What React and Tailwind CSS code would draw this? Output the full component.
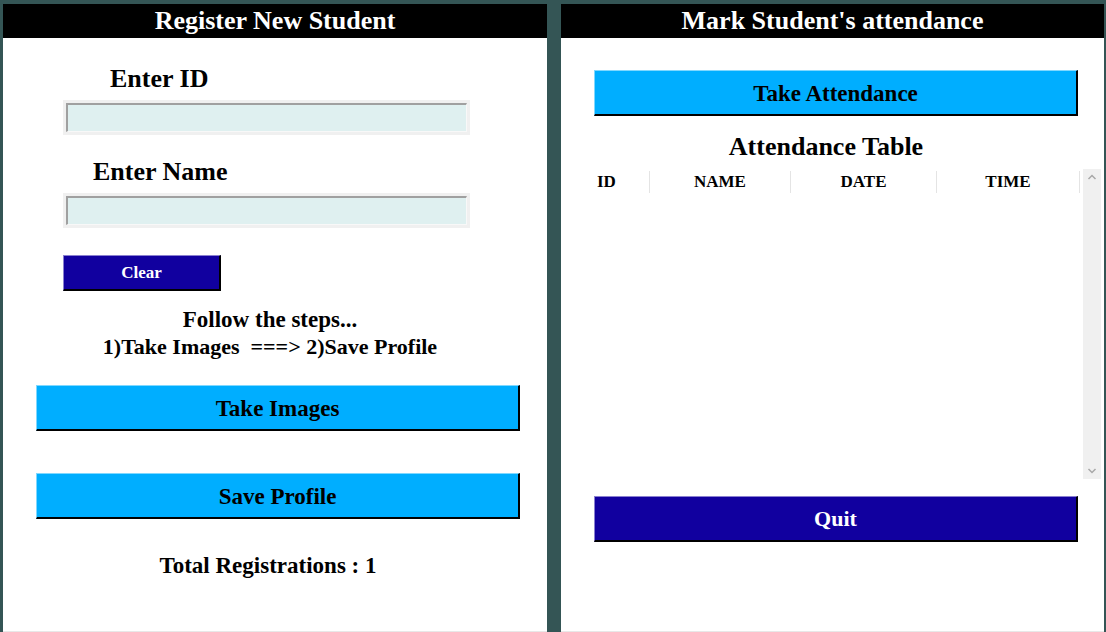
import React from 'react';

const serif = { fontFamily: '"Liberation Serif", "Times New Roman", serif' };

const Field = () => (
  <div className="ml-[60px] w-[407px] h-[35px] bg-[#f0f0f0] p-[3px]">
    <div className="w-full h-full bg-[#dff0f0] border-t-2 border-l-2 border-[#a0a0a0] border-b border-r border-b-[#f8f8f8] border-r-[#f8f8f8]"></div>
  </div>
);

const BigButton = ({ label, dark, size }) => (
  <div
    className={
      'ml-[33px] w-[484px] h-[46px] flex items-center justify-center font-bold border-t border-l border-b-2 border-r-2 border-b-black border-r-black ' +
      (size || 'text-[23px] pt-[3px]') +
      (dark
        ? ' bg-[#11009f] text-white border-t-[#8a80d0] border-l-[#8a80d0]'
        : ' bg-[#00aeff] text-black border-t-[#80d8ff] border-l-[#80d8ff]')
    }
  >
    {label}
  </div>
);

const ScrollBar = () => (
  <div className="w-[18px] h-full bg-[#f0f0f0] flex flex-col items-center justify-between py-[4px]">
    <svg width="10" height="8" viewBox="0 0 10 8">
      <path d="M1.5 6 L5 2.5 L8.5 6" stroke="#a8a8a8" strokeWidth="1.5" fill="none" />
    </svg>
    <svg width="10" height="8" viewBox="0 0 10 8">
      <path d="M1.5 2 L5 5.5 L8.5 2" stroke="#a8a8a8" strokeWidth="1.5" fill="none" />
    </svg>
  </div>
);

const RegisterPanel = () => (
  <div className="w-[544px] h-[628px] bg-white flex flex-col border-b border-[#e8e8e8]">
    <div className="h-[34px] bg-black text-white text-[26px] font-bold flex items-center justify-center leading-none">
      Register New Student
    </div>
    <div className="ml-[107px] mt-[28px] text-[26px] font-bold leading-[26px]">Enter ID</div>
    <div className="mt-[8px]">
      <Field />
    </div>
    <div className="ml-[90px] mt-[24px] text-[26px] font-bold leading-[26px]">Enter Name</div>
    <div className="mt-[8px]">
      <Field />
    </div>
    <div className="ml-[60px] mt-[27px] w-[158px] h-[36px] bg-[#11009f] text-white text-[17px] font-bold flex items-center justify-center border-t border-l border-t-[#8a80d0] border-l-[#8a80d0] border-b-2 border-r-2 border-b-black border-r-black">
      Clear
    </div>
    <div className="mt-[17px] w-[534px] text-center text-[23px] font-bold leading-[24px]">Follow the steps...</div>
    <div className="mt-[4px] w-[534px] text-center text-[22px] font-bold leading-[22px] whitespace-pre">
      {'1)Take Images  ===> 2)Save Profile'}
    </div>
    <div className="mt-[27px]">
      <BigButton label="Take Images" />
    </div>
    <div className="mt-[42px]">
      <BigButton label="Save Profile" />
    </div>
    <div className="mt-[35px] w-[530px] text-center text-[23px] font-bold leading-[24px]">Total Registrations : 1</div>
  </div>
);

const AttendancePanel = () => (
  <div className="w-[543px] h-[628px] bg-white flex flex-col border-b border-[#e8e8e8]">
    <div className="h-[34px] bg-black text-white text-[26px] font-bold flex items-center justify-center leading-none">
      Mark Student's attendance
    </div>
    <div className="mt-[32px]">
      <BigButton label="Take Attendance" />
    </div>
    <div className="mt-[18px] w-[530px] text-center text-[26px] font-bold leading-[26px]">Attendance Table</div>
    <div className="ml-[33px] mt-[9px] w-[507px] h-[310px] flex">
      <div className="flex-1 h-full">
        <div className="flex h-[26px] items-center text-[17px] font-bold">
          <div className="w-[56px] pl-[3px] h-[22px] flex items-center border-r border-[#e4e4e4]">ID</div>
          <div className="w-[141px] h-[22px] flex items-center justify-center border-r border-[#e4e4e4]">NAME</div>
          <div className="w-[146px] h-[22px] flex items-center justify-center border-r border-[#e4e4e4]">DATE</div>
          <div className="w-[143px] h-[22px] flex items-center justify-center border-r border-[#e4e4e4]">TIME</div>
        </div>
      </div>
      <ScrollBar />
    </div>
    <div className="mt-[17px]">
      <BigButton label="Quit" dark size="text-[22px]" />
    </div>
  </div>
);

export default function App() {
  return (
    <div className="w-[1106px] h-[632px] bg-[#345555] overflow-hidden pt-[4px] pl-[3px] flex gap-[14px]" style={serif}>
      <RegisterPanel />
      <AttendancePanel />
    </div>
  );
}
